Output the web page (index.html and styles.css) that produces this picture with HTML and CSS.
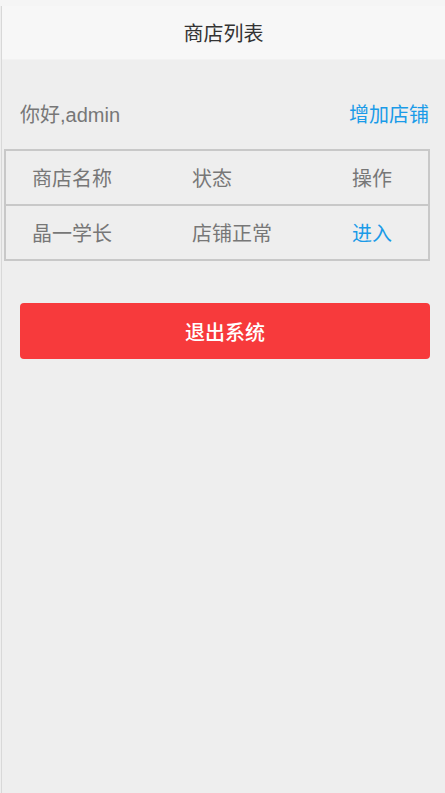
FILE: index.html
```html
<!DOCTYPE html>
<html lang="zh">
 <head>
  <meta charset="utf-8">
  <meta name="viewport" content="width=device-width, initial-scale=1.0">
  <title>商店列表</title>
  <link rel="stylesheet" href="styles.css">
 </head>
 <body>
  <div class="topstrip"></div>
  <div class="page">
   <div class="header">商店列表</div>
   <div class="welcome">
    <span class="hello">你好,admin</span>
    <a class="addshop" href="#">增加店铺</a>
   </div>
   <table class="shops">
    <tr>
     <td class="col1">商店名称</td>
     <td class="col2">状态</td>
     <td class="col3">操作</td>
    </tr>
    <tr>
     <td class="col1">晶一学长</td>
     <td class="col2">店铺正常</td>
     <td class="col3"><a class="enter" href="#">进入</a></td>
    </tr>
   </table>
   <div class="logout">
    <button class="logoutbtn">退出系统</button>
   </div>
  </div>
 </body>
</html>
```

FILE: styles.css
```css
html, body {
 margin: 0;
 padding: 0;
 height: 100%;
}

body {
 background-color: #eeeeee;
 font-family: "Liberation Sans", "Noto Sans CJK SC", sans-serif;
 color: #777;
 font-size: 20px;
}

.topstrip {
 height: 6px;
 background-color: #f5f5f5;
}

.page {
 margin-left: 1px;
 border-left: 1px solid #d8d8d8;
 min-height: calc(100% - 6px);
 box-sizing: border-box;
}

.header {
 height: 53px;
 line-height: 53px;
 background-color: #f7f7f7;
 border-bottom: 1px solid #f2f2f2;
 text-align: center;
 color: #333;
 font-size: 20px;
 font-family: "Noto Sans CJK SC", sans-serif;
}

.welcome {
 display: flex;
 justify-content: space-between;
 align-items: center;
 height: 36px;
 margin-top: 35px;
 padding: 0 16px 0 18px;
}

.hello {
 color: #777;
}

.addshop, .enter {
 color: #1a9be8;
 text-decoration: none;
}

.shops {
 border-collapse: collapse;
 width: 426px;
 margin: 18px 0 0 2px;
 border: 2px solid #c8c8c8;
}

.shops td {
 height: 53px;
 padding: 0 0 0 26px;
 border-top: 2px solid #c8c8c8;
 color: #777;
 font-size: 20px;
 font-family: "Noto Sans CJK SC", sans-serif;
}

.shops .col1, .shops .col2 {
 width: 134px;
}

.logout {
 padding: 42px 15px 0 18px;
}

.logoutbtn {
 display: block;
 width: 100%;
 height: 56px;
 border: none;
 border-radius: 4px;
 background-color: #f73a3c;
 color: white;
 font-family: "Noto Sans CJK SC", sans-serif;
 font-size: 20px;
 font-weight: 500;
}
```
